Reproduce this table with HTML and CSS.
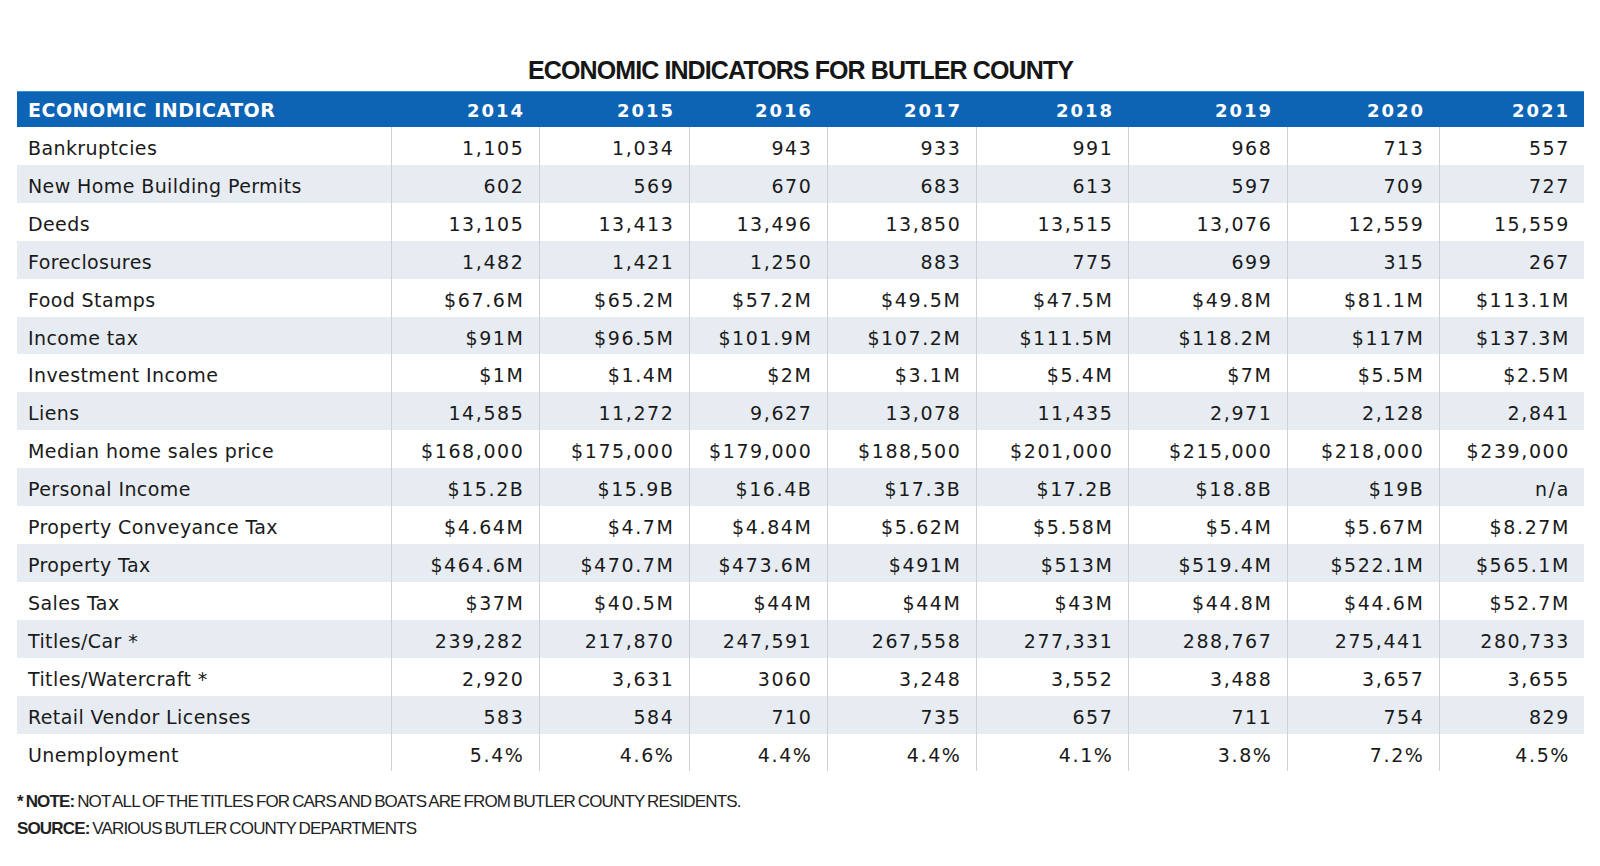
FILE: index.html
```html
<!DOCTYPE html>
<html lang="en">
<head>
<meta charset="utf-8">
<title>Economic Indicators for Butler County</title>
<link rel="stylesheet" href="styles.css">
</head>
<body>
<div class="wrap">
  <h1 class="title">ECONOMIC INDICATORS FOR BUTLER COUNTY</h1>
  <table class="data">
    <colgroup>
      <col class="c0"><col class="c1"><col class="c2"><col class="c3"><col class="c4"><col class="c5"><col class="c6"><col class="c7"><col class="c8">
    </colgroup>
    <thead>
      <tr>
        <th class="lbl">ECONOMIC INDICATOR</th>
        <th>2014</th><th>2015</th><th>2016</th><th>2017</th><th>2018</th><th>2019</th><th>2020</th><th>2021</th>
      </tr>
    </thead>
    <tbody>
      <tr><td class="lbl">Bankruptcies</td><td>1,105</td><td>1,034</td><td>943</td><td>933</td><td>991</td><td>968</td><td>713</td><td>557</td></tr>
      <tr><td class="lbl">New Home Building Permits</td><td>602</td><td>569</td><td>670</td><td>683</td><td>613</td><td>597</td><td>709</td><td>727</td></tr>
      <tr><td class="lbl">Deeds</td><td>13,105</td><td>13,413</td><td>13,496</td><td>13,850</td><td>13,515</td><td>13,076</td><td>12,559</td><td>15,559</td></tr>
      <tr><td class="lbl">Foreclosures</td><td>1,482</td><td>1,421</td><td>1,250</td><td>883</td><td>775</td><td>699</td><td>315</td><td>267</td></tr>
      <tr><td class="lbl">Food Stamps</td><td>$67.6M</td><td>$65.2M</td><td>$57.2M</td><td>$49.5M</td><td>$47.5M</td><td>$49.8M</td><td>$81.1M</td><td>$113.1M</td></tr>
      <tr><td class="lbl">Income tax</td><td>$91M</td><td>$96.5M</td><td>$101.9M</td><td>$107.2M</td><td>$111.5M</td><td>$118.2M</td><td>$117M</td><td>$137.3M</td></tr>
      <tr><td class="lbl">Investment Income</td><td>$1M</td><td>$1.4M</td><td>$2M</td><td>$3.1M</td><td>$5.4M</td><td>$7M</td><td>$5.5M</td><td>$2.5M</td></tr>
      <tr><td class="lbl">Liens</td><td>14,585</td><td>11,272</td><td>9,627</td><td>13,078</td><td>11,435</td><td>2,971</td><td>2,128</td><td>2,841</td></tr>
      <tr><td class="lbl">Median home sales price</td><td>$168,000</td><td>$175,000</td><td>$179,000</td><td>$188,500</td><td>$201,000</td><td>$215,000</td><td>$218,000</td><td>$239,000</td></tr>
      <tr><td class="lbl">Personal Income</td><td>$15.2B</td><td>$15.9B</td><td>$16.4B</td><td>$17.3B</td><td>$17.2B</td><td>$18.8B</td><td>$19B</td><td>n/a</td></tr>
      <tr><td class="lbl">Property Conveyance Tax</td><td>$4.64M</td><td>$4.7M</td><td>$4.84M</td><td>$5.62M</td><td>$5.58M</td><td>$5.4M</td><td>$5.67M</td><td>$8.27M</td></tr>
      <tr><td class="lbl">Property Tax</td><td>$464.6M</td><td>$470.7M</td><td>$473.6M</td><td>$491M</td><td>$513M</td><td>$519.4M</td><td>$522.1M</td><td>$565.1M</td></tr>
      <tr><td class="lbl">Sales Tax</td><td>$37M</td><td>$40.5M</td><td>$44M</td><td>$44M</td><td>$43M</td><td>$44.8M</td><td>$44.6M</td><td>$52.7M</td></tr>
      <tr><td class="lbl">Titles/Car *</td><td>239,282</td><td>217,870</td><td>247,591</td><td>267,558</td><td>277,331</td><td>288,767</td><td>275,441</td><td>280,733</td></tr>
      <tr><td class="lbl">Titles/Watercraft *</td><td>2,920</td><td>3,631</td><td>3060</td><td>3,248</td><td>3,552</td><td>3,488</td><td>3,657</td><td>3,655</td></tr>
      <tr><td class="lbl">Retail Vendor Licenses</td><td>583</td><td>584</td><td>710</td><td>735</td><td>657</td><td>711</td><td>754</td><td>829</td></tr>
      <tr><td class="lbl">Unemployment</td><td>5.4%</td><td>4.6%</td><td>4.4%</td><td>4.4%</td><td>4.1%</td><td>3.8%</td><td>7.2%</td><td>4.5%</td></tr>
    </tbody>
  </table>
  <p class="foot"><b>* NOTE:</b> NOT ALL OF THE TITLES FOR CARS AND BOATS ARE FROM BUTLER COUNTY RESIDENTS.</p>
  <p class="foot"><b>SOURCE:</b> VARIOUS BUTLER COUNTY DEPARTMENTS</p>
</div>
</body>
</html>
```
FILE: styles.css
```css
html, body {
  margin: 0;
  padding: 0;
  background: #ffffff;
}

.wrap {
  padding: 55px 16px 0 17px;
  color: #1c1c1c;
}

.title {
  margin: 0 0 6px 0;
  font-family: "Liberation Sans", Arial, sans-serif;
  font-weight: 700;
  font-size: 25px;
  line-height: 30px;
  letter-spacing: -0.9px;
  text-align: center;
  color: #161616;
}

.data {
  width: 1567px;
  table-layout: fixed;
  border-collapse: collapse;
  border-spacing: 0;
}

.c0 { width: 374px; }
.c1 { width: 148px; }
.c2 { width: 150px; }
.c3 { width: 138px; }
.c4 { width: 149px; }
.c5 { width: 152px; }
.c6 { width: 159px; }
.c7 { width: 152px; }
.c8 { width: 145px; }

.data thead tr {
  background: #0d63b4;
  border-top: 1px solid #3f8fd6;
}

.data th {
  height: 35px;
  padding: 2px 14px 0 0;
  box-sizing: border-box;
  font-family: "DejaVu Sans", sans-serif;
  font-weight: 700;
  font-size: 18px;
  line-height: 33px;
  letter-spacing: 2px;
  color: #ffffff;
  text-align: right;
  white-space: nowrap;
}

.data th.lbl {
  text-align: left;
  padding-left: 11px;
  font-size: 19px;
  letter-spacing: 0.5px;
}

.data td {
  height: 37.9px;
  padding: 5px 14px 0 0;
  box-sizing: border-box;
  font-family: "DejaVu Sans", sans-serif;
  font-size: 19px;
  line-height: 32.9px;
  letter-spacing: 1.6px;
  color: #1a1a1a;
  text-align: right;
  white-space: nowrap;
  border-left: 1px solid #cdd1d6;
}

.data td.lbl {
  text-align: left;
  padding-left: 11px;
  letter-spacing: 0.4px;
  border-left: none;
}

.data tbody tr:nth-child(even) {
  background: #e7ecf2;
}

.foot {
  margin: 0;
  font-family: "Liberation Sans", Arial, sans-serif;
  font-size: 17px;
  line-height: 27px;
  letter-spacing: -0.85px;
  word-spacing: -1px;
  color: #222222;
}

.foot:first-of-type {
  margin-top: 17px;
}

.foot b {
  font-weight: 700;
}
```
